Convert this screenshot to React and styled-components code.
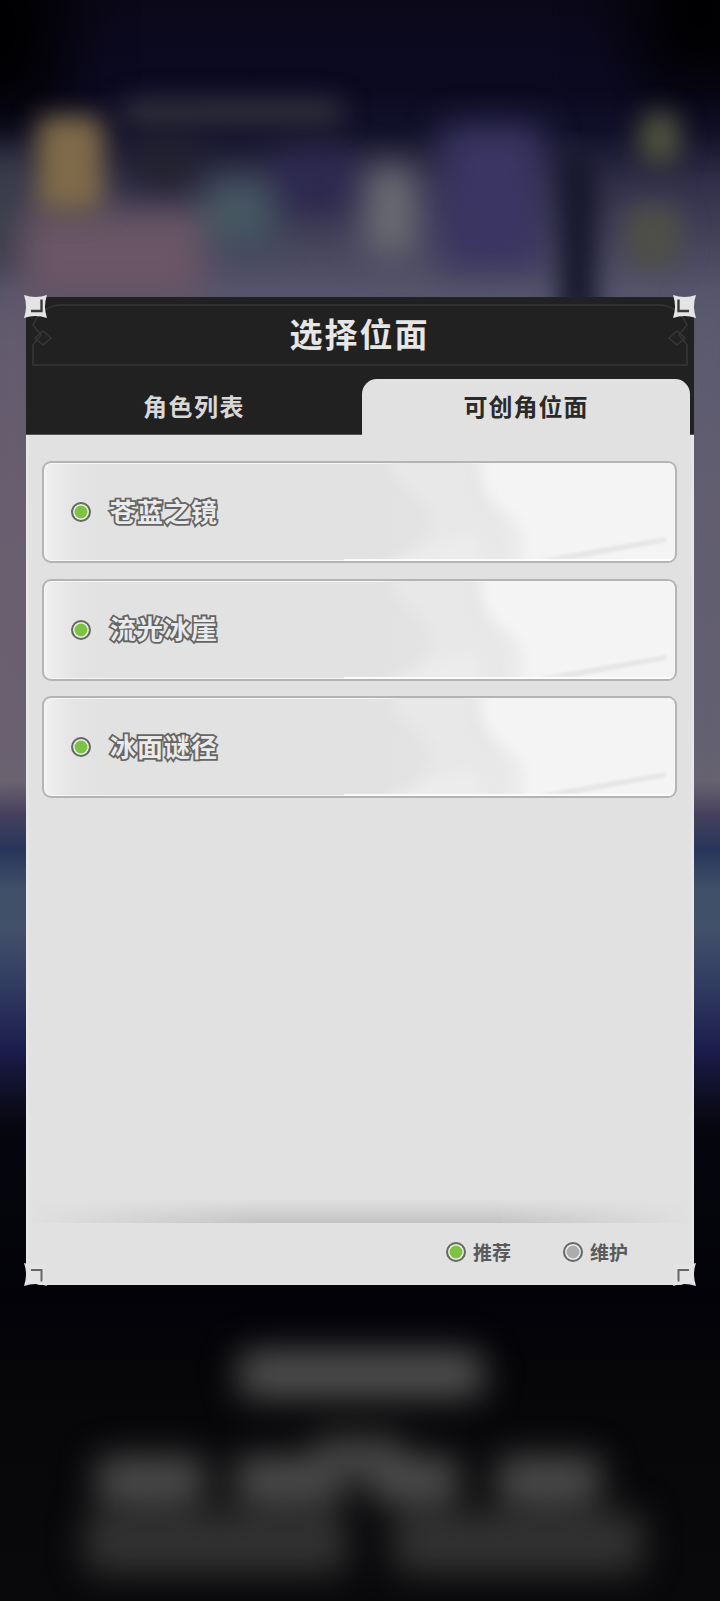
import React from "react";
import styled, { createGlobalStyle } from "styled-components";

const Global = createGlobalStyle`
  html, body { margin: 0; padding: 0; background: #000; }
  * { box-sizing: border-box; }
`;

const FONT = `"Noto Sans CJK SC", "Noto Sans", sans-serif`;

const Page = styled.div`
  position: relative;
  width: 720px;
  height: 1601px;
  overflow: hidden;
  padding: 297px 26px 0;
  font-family: ${FONT};
  background: linear-gradient(180deg,
    #0a0818 0, #0c0a22 90px, #12112a 130px, #32304a 185px, #55546a 290px,
    #665e6e 500px, #6a6470 780px, #46405e 815px, #27365a 850px, #3f5068 890px,
    #42506a 930px, #2f3a60 990px, #1c1c4c 1050px, #101028 1090px, #06060e 1130px,
    #020208 1300px, #070709 1400px, #09090b 1601px);
`;

const Backdrop = styled.svg`
  position: absolute;
  inset: 0;
  width: 720px;
  height: 1601px;
`;

const Modal = styled.div`
  position: relative;
  display: flex;
  flex-direction: column;
  width: 668px;
  height: 988px;
  border-radius: 16px;
  background: #e1e1e1;
  box-shadow: inset 4px 0 3px -2px #e9e9e9, inset -4px 0 3px -2px #e9e9e9;
`;

const Header = styled.div`
  position: relative;
  background: #212121;
  border-radius: 16px 16px 0 0;
`;

const TitleBar = styled.div`
  height: 82px;
  display: flex;
  justify-content: center;
  align-items: center;
`;

const Frame = styled.svg`
  position: absolute;
  top: 0;
  left: 0;
  width: 668px;
  height: 82px;
`;

const Title = styled.h1`
  position: relative;
  margin: 0 -2px 10px -3px;
  font-size: 33px;
  line-height: 44px;
  font-weight: 700;
  letter-spacing: 2px;
  color: #e6e6e6;
`;

const TabRow = styled.div`
  display: grid;
  grid-template-columns: 336px 328px;
  height: 56px;
  box-shadow: inset 0 -1px 0 #555;
`;

const Tab = styled.div`
  display: flex;
  align-items: center;
  justify-content: center;
  font-size: 24px;
  font-weight: 700;
  letter-spacing: ${p => (p.$active ? "1px" : "1.5px")};
  padding-bottom: 3px;
  color: ${p => (p.$active ? "#2a2a2a" : "#d8d8d8")};
  background: ${p => (p.$active ? "#e1e1e1" : "transparent")};
  border-radius: ${p => (p.$active ? "15px 15px 0 0" : "0")};
`;

const Body = styled.div`
  flex: 1;
  display: flex;
  flex-direction: column;
  gap: 15.5px;
  padding: 26px 17px 0 16px;
`;

const Row = styled.div`
  position: relative;
  display: flex;
  align-items: center;
  gap: 19px;
  height: 102px;
  padding: 0 0 0 27px;
  border: 2px solid #b4b4b4;
  border-radius: 9px;
  overflow: hidden;
  background: linear-gradient(90deg, #f2f2f2 0, #ebebeb 12px, #e4e4e4 32px, #e2e2e2 60px, #e2e2e2 330px, #e5e5e5 430px, #f0f0f0 500px, #f8f8f8 100%);
  box-shadow: inset 0 0 0 1px #f6f6f6;
`;

const RowArt = styled.svg`
  position: absolute;
  inset: 0;
  width: 630px;
  height: 98px;
`;

const Dot = styled.span`
  position: relative;
  flex: none;
  width: 20px;
  height: 20px;
  border-radius: 50%;
  border: 2.5px solid #666a66;
  background: ${p => p.$fill};
  box-shadow: inset 0 0 0 1.5px #eef0ec;
`;

const RowName = styled.span`
  position: relative;
  margin-bottom: 3px;
  font-size: 26px;
  line-height: 36px;
  font-weight: 700;
  letter-spacing: 1px;
  color: #ebebeb;
  -webkit-text-stroke: 3.6px #656565;
  paint-order: stroke fill;
`;

const Footer = styled.div`
  position: relative;
  height: 62px;
  display: flex;
  align-items: center;
  justify-content: flex-end;
  gap: 52px;
  padding: 0 66px 4px 0;
  &::before {
    content: "";
    position: absolute;
    left: 0;
    right: 0;
    top: -24px;
    height: 24px;
    background: linear-gradient(90deg, rgba(190,190,190,0) 0, rgba(190,190,190,0.85) 35%, rgba(190,190,190,0.85) 70%, rgba(190,190,190,0) 100%);
    -webkit-mask-image: linear-gradient(180deg, transparent, #000);
    mask-image: linear-gradient(180deg, transparent, #000);
  }
`;

const Legend = styled.div`
  display: flex;
  align-items: center;
  gap: 7px;
  font-size: 19px;
  line-height: 24px;
  font-weight: 700;
  color: #5a5a5a;
`;

const Corner = styled.svg`
  position: absolute;
  width: 23px;
  height: 23px;
  ${p => (p.$v === "top" ? "top: -2px;" : "bottom: -1px;")}
  ${p => (p.$h === "left" ? "left: -2px;" : "right: -2px;")}
  transform: scale(${p => (p.$h === "left" ? 1 : -1)}, ${p => (p.$v === "top" ? 1 : -1)});
`;

const CornerStar = ({ v, h }) => (
  <Corner $v={v} $h={h} viewBox="0 0 23 23">
    <path d="M0 0Q11.5 4 23 0Q19 11.5 23 23Q11.5 19 0 23Q4 11.5 0 0Z" fill="#e4e4e4" />
    <path
      d="M17.5 4.5V16H7"
      fill="none"
      stroke={v === "top" ? "#3a3a3a" : "#666"}
      strokeWidth={v === "top" ? 2.4 : 2}
    />
  </Corner>
);

const Blob = ({ x, y, w, h, c, o = 1 }) => <rect x={x} y={y} width={w} height={h} rx="14" fill={c} opacity={o} />;

const FLOW = ["苍蓝之镜", "流光冰崖", "冰面谜径"];

export default function App() {
  return (
    <Page>
      <Global />
      <Backdrop viewBox="0 0 720 1601">
        <defs>
          <filter id="soft" x="-30%" y="-30%" width="160%" height="160%" colorInterpolationFilters="sRGB">
            <feGaussianBlur stdDeviation="17" />
          </filter>
          <filter id="softer" x="-30%" y="-30%" width="160%" height="160%" colorInterpolationFilters="sRGB">
            <feGaussianBlur stdDeviation="13" />
          </filter>
          <filter id="vignette" x="-50%" y="-50%" width="200%" height="200%" colorInterpolationFilters="sRGB">
            <feGaussianBlur stdDeviation="34" />
          </filter>
        </defs>
        <g filter="url(#vignette)">
          <Blob x={-60} y={-60} w={120} h={180} c="#000" />
          <Blob x={640} y={-60} w={120} h={150} c="#000" />
        </g>
        <g filter="url(#soft)">
          <Blob x={-20} y={150} w={50} h={120} c="#3c3e4c" />
          <Blob x={20} y={210} w={185} h={90} c="#6a5666" />
          <Blob x={205} y={180} w={70} h={65} c="#465862" />
          <Blob x={130} y={140} w={70} h={50} c="#22222e" />
          <Blob x={275} y={150} w={80} h={60} c="#2d2850" />
          <Blob x={365} y={165} w={52} h={90} c="#6c6c74" />
          <Blob x={440} y={125} w={104} h={145} c="#3a3562" />
          <Blob x={694} y={300} w={26} h={480} c="#5e5e72" />
          <Blob x={0} y={300} w={26} h={480} c="#6b5f70" />
        </g>
        <g filter="url(#softer)">
          <Blob x={120} y={100} w={225} h={24} c="#34333c" />
          <Blob x={36} y={116} w={68} h={96} c="#7f6b4a" />
          <Blob x={560} y={155} w={36} h={170} c="#15152a" />
          <Blob x={640} y={112} w={40} h={52} c="#50533f" />
          <Blob x={626} y={205} w={54} h={62} c="#4f5048" />
        </g>
        <g filter="url(#soft)">
          <Blob x={238} y={1350} w={246} h={48} c="#505050" />
          <Blob x={96} y={1456} w={110} h={48} c="#4c4c4c" />
          <Blob x={234} y={1456} w={110} h={48} c="#4c4c4c" />
          <Blob x={312} y={1436} w={92} h={44} c="#444" />
          <Blob x={370} y={1456} w={90} h={48} c="#4c4c4c" />
          <Blob x={496} y={1456} w={106} h={48} c="#4c4c4c" />
          <Blob x={84} y={1512} w={264} h={62} c="#323232" />
          <Blob x={392} y={1512} w={252} h={62} c="#323232" />
        </g>
      </Backdrop>

      <Modal>
        <Header>
          <TitleBar>
            <Frame viewBox="0 0 668 82">
              <path
                d="M36 8H632C646 8 656 16 661 28L653 38L661 48V68H7V48L15 38L7 28C12 16 22 8 36 8Z"
                fill="none"
                stroke="#363636"
                strokeWidth="1.5"
              />
              <path d="M9 41L17 34L25 41L17 48ZM659 41L651 34L643 41L651 48Z" fill="none" stroke="#363636" strokeWidth="1.5" />
            </Frame>
            <Title>选择位面</Title>
          </TitleBar>
          <TabRow>
            <Tab>角色列表</Tab>
            <Tab $active>可创角位面</Tab>
          </TabRow>
        </Header>

        <Body>
          {FLOW.map(name => (
            <Row key={name}>
              <RowArt viewBox="0 0 630 98">
                <defs>
                  <filter id="art" x="-10%" y="-10%" width="120%" height="120%" colorInterpolationFilters="sRGB">
                    <feGaussianBlur stdDeviation="7" />
                  </filter>
                  <filter id="streak" colorInterpolationFilters="sRGB">
                    <feGaussianBlur stdDeviation="0.8" />
                  </filter>
                </defs>
                <g filter="url(#art)">
                  <path d="M345 -20H430C420 25 432 45 452 60C465 75 458 92 440 118H330C372 90 392 70 388 52C378 25 345 30 345 -20Z" fill="#e8e8e8" />
                  <path d="M440 -20H650V118H470C490 85 485 65 462 50C442 35 430 20 440 -20Z" fill="#f4f4f4" />
                  <path d="M310 118C350 92 385 85 420 72C436 70 440 85 436 118Z" fill="#ececec" />
                </g>
                <path d="M496 96L622 74V79L530 96Z" fill="#e6e6e6" filter="url(#streak)" />
                <path d="M300 96H630V98H300Z" fill="#fbfbfb" />
              </RowArt>
              <Dot $fill="#7dc242" />
              <RowName>{name}</RowName>
            </Row>
          ))}
        </Body>

        <Footer>
          <Legend>
            <Dot $fill="#7dc242" />
            推荐
          </Legend>
          <Legend>
            <Dot $fill="#acacac" />
            维护
          </Legend>
        </Footer>

        <CornerStar v="top" h="left" />
        <CornerStar v="top" h="right" />
        <CornerStar v="bottom" h="left" />
        <CornerStar v="bottom" h="right" />
      </Modal>
    </Page>
  );
}
